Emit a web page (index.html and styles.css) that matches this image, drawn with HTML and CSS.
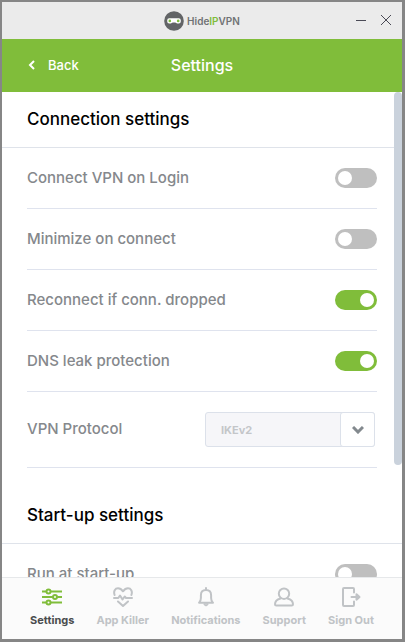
FILE: index.html
```html
<!DOCTYPE html>
<html lang="en">
<head>
<meta charset="utf-8">
<meta name="viewport" content="width=device-width, initial-scale=1">
<title>HideIPVPN - Settings</title>
<link rel="stylesheet" href="styles.css">
</head>
<body>
<div class="window">
  <div class="titlebar">
    <div class="brand">
      <svg class="brand-mark" viewBox="0 0 20 20" aria-hidden="true">
        <circle cx="10" cy="10" r="9.8" fill="#626466"/>
        <path d="M5.200 7.200h9.600a2 2 0 0 1 2 2v1.200a2 2 0 0 1-2 2h-1.600c-.8 0-1.200-1-2-1H8.800c-.8 0-1.200 1-2 1H5.200a2 2 0 0 1-2-2V9.200a2 2 0 0 1 2-2z" fill="#fff"/>
        <circle cx="5.800" cy="9.900" r="1.300" fill="#7fbf3b"/>
        <circle cx="14.200" cy="9.900" r="1.300" fill="#7fbf3b"/>
      </svg>
      <span class="brand-name">Hide<span class="brand-accent">IP</span>VPN</span>
    </div>
    <div class="window-controls">
      <button class="window-button" type="button" aria-label="Minimize">
        <svg viewBox="0 0 12 12"><path d="M1 6.500h10"/></svg>
      </button>
      <button class="window-button" type="button" aria-label="Close">
        <svg viewBox="0 0 12 12"><path d="M1 1l10 10M11 1L1 11"/></svg>
      </button>
    </div>
  </div>

  <header class="header">
    <button class="back" type="button">
      <svg class="back-icon" viewBox="0 0 8 10" aria-hidden="true"><path d="M7 1L3 5l4 4"/></svg>
      Back
    </button>
    <h1 class="title">Settings</h1>
  </header>

  <main class="content">
    <div class="scroll-thumb"></div>
    <section>
      <h2 class="section-title">Connection settings</h2>
      <div class="rows">
        <div class="row">
          <label for="login">Connect VPN on Login</label>
          <input class="toggle" type="checkbox" id="login">
        </div>
        <div class="row">
          <label for="minimize">Minimize on connect</label>
          <input class="toggle" type="checkbox" id="minimize">
        </div>
        <div class="row">
          <label for="reconnect">Reconnect if conn. dropped</label>
          <input class="toggle" type="checkbox" id="reconnect" checked>
        </div>
        <div class="row">
          <label for="dns">DNS leak protection</label>
          <input class="toggle" type="checkbox" id="dns" checked>
        </div>
        <div class="row row-tall">
          <label for="protocol">VPN Protocol</label>
          <div class="select">
            <select id="protocol"><option>IKEv2</option></select>
            <span class="select-arrow">
              <svg viewBox="0 0 12 8" aria-hidden="true"><path d="M1 1l5 5 5-5"/></svg>
            </span>
          </div>
        </div>
      </div>
    </section>
    <section>
      <h2 class="section-title section-title-next">Start-up settings</h2>
      <div class="rows">
        <div class="row">
          <label for="startup">Run at start-up</label>
          <input class="toggle" type="checkbox" id="startup">
        </div>
      </div>
    </section>
  </main>

  <nav class="nav">
    <a class="nav-item nav-item-active" href="#settings">
      <svg viewBox="0 0 20 20" aria-hidden="true"><path d="M0 4.500h4.500M8.500 4.500H20M0 10h11M15 10h5M0 15.500h4.500M8.500 15.500H20"/><circle cx="6.500" cy="4.500" r="2"/><circle cx="13" cy="10" r="2"/><circle cx="6.500" cy="15.500" r="2"/></svg>
      Settings
    </a>
    <a class="nav-item" href="#app-killer">
      <svg viewBox="0 0 20 20" aria-hidden="true"><path d="M1.600 8C.2 4.200 2.200 1.300 5 1.300c2.200 0 3.700 1.200 5 3 1.300-1.800 2.800-3 5-3 2.800 0 4.800 2.900 3.400 6.700M1 11h4.300l1.700-2.500 2.500 4 2.200-3 1.300 1.500h6M5 14.500l5 4.500 5-4.500"/></svg>
      App Killer
    </a>
    <a class="nav-item" href="#notifications">
      <svg viewBox="0 0 20 20" aria-hidden="true"><path d="M10 1v2M3 15.700h14c-1.400-1-1.900-2.500-1.900-4.700V8.200C15.100 5 13 3 10 3S4.900 5 4.900 8.200V11c0 2.200-.5 3.700-1.900 4.700z"/><path d="M8 17.200c.4 1.200 1 1.500 2 1.500s1.600-.3 2-1.500z" fill="currentColor" stroke-width="1"/></svg>
      Notifications
    </a>
    <a class="nav-item" href="#support">
      <svg viewBox="0 0 20 20" aria-hidden="true"><circle cx="10" cy="6.700" r="5.200"/><path d="M6.500 11.500C3 12.500 1 14.800 1 17.200c0 .9.500 1.300 1.300 1.300h15.400c.8 0 1.300-.4 1.300-1.300 0-2.400-2-4.700-5.500-5.700"/></svg>
      Support
    </a>
    <a class="nav-item" href="#sign-out">
      <svg viewBox="0 0 20 20" aria-hidden="true"><path d="M13 5.500V2c0-.7-.3-1-1-1H3c-.7 0-1 .3-1 1v16c0 .7.300 1 1 1h9c.7 0 1-.3 1-1v-3.500M10.500 10H18"/><path d="M15.500 7.300L18.500 10l-3 2.700z" fill="currentColor"/></svg>
      Sign Out
    </a>
  </nav>
</div>
</body>
</html>
```
FILE: styles.css
```css
* {
  box-sizing: border-box;
}

body {
  margin: 0;
  font-family: Inter, "Open Sans", sans-serif;
  color: #000;
}

button {
  padding: 0;
  border: 0;
  background: none;
  font: inherit;
  color: inherit;
}

svg {
  display: block;
  fill: none;
  stroke: currentColor;
}

.window {
  display: flex;
  flex-direction: column;
  height: 100vh;
  border: solid #868686;
  border-width: 2px 3px 3px 2px;
  background: #fff;
}

.titlebar {
  display: grid;
  grid-template-columns: 1fr auto 1fr;
  align-items: center;
  flex: none;
  height: 37px;
  padding: 0 10px;
  background: #ebebeb;
}

.brand {
  display: flex;
  grid-column: 2;
  align-items: center;
  gap: 3px;
}

.brand-mark {
  width: 20px;
  height: 20px;
  stroke: none;
}

.brand-name {
  font-size: 10px;
  font-weight: 600;
  color: #707274;
}

.brand-accent {
  color: #80bd3a;
}

.window-controls {
  display: flex;
  justify-content: flex-end;
  gap: 13px;
  padding-bottom: 2px;
}

.window-button svg {
  width: 12px;
  height: 12px;
  stroke: #4a4a55;
}

.header {
  display: grid;
  grid-template-columns: 1fr auto 1fr;
  align-items: center;
  flex: none;
  height: 53px;
  padding: 0 25px 2px;
  background: #80bd3a;
  color: #fff;
}

.back {
  display: flex;
  align-items: center;
  gap: 13px;
  font-size: 13px;
  font-weight: 500;
}

.back-icon {
  width: 8px;
  height: 10px;
  stroke-width: 2;
}

.title {
  margin: 0;
  font-size: 16px;
  font-weight: 500;
}

.content {
  position: relative;
  flex: 1;
  min-height: 0;
  overflow: hidden;
}

.scroll-thumb {
  position: absolute;
  top: 0;
  right: 0;
  width: 8px;
  height: 77%;
  border-radius: 4px;
  background: #cad2dc;
}

.section-title {
  margin: 0;
  padding: 0 25px;
  border-bottom: 1px solid #dfe3ea;
  font-size: 17px;
  font-weight: 500;
  line-height: 55px;
}

.section-title-next {
  padding-top: 20px;
}

.rows {
  padding: 0 25px;
}

.row {
  display: flex;
  align-items: center;
  justify-content: space-between;
  height: 61px;
  border-bottom: 1px solid #dfe3ee;
  font-size: 15px;
  font-weight: 500;
  color: #85888c;
}

.row label {
  padding-bottom: 2px;
}

.row-tall {
  height: 76px;
}

.toggle {
  appearance: none;
  width: 42px;
  height: 20px;
  margin: 0;
  padding: 3px;
  border-radius: 10px;
  background: #bfbfbf;
}

.toggle::before {
  content: "";
  display: block;
  width: 14px;
  height: 14px;
  border-radius: 50%;
  background: #fff;
}

.toggle:checked {
  background: #80bd3a;
}

.toggle:checked::before {
  margin-left: auto;
}

.select {
  display: grid;
  grid-template-columns: 1fr 35px;
  width: 170px;
  height: 35px;
  margin-right: 2px;
}

.select select {
  grid-area: 1 / 1 / 2 / 3;
  appearance: none;
  margin: 0;
  padding: 0 15px;
  border: 1px solid #dce1ea;
  border-radius: 3px;
  background: #f6f6f9;
  font-family: inherit;
  font-size: 11px;
  font-weight: 700;
  color: #c4c6c9;
}

.select-arrow {
  display: grid;
  grid-area: 1 / 2;
  place-items: center;
  border: 1px solid #dce1ea;
  border-radius: 3px;
  background: #fff;
  color: #83898e;
  pointer-events: none;
}

.select-arrow svg {
  width: 12px;
  height: 8px;
  stroke-width: 3;
}

.nav {
  display: flex;
  justify-content: space-between;
  flex: none;
  height: 62px;
  padding: 9px 28px 0;
  border-top: 1px solid #e6e8ea;
  background: #fbfbfb;
}

.nav-item {
  display: flex;
  flex-direction: column;
  align-items: center;
  gap: 5px;
  font-size: 11px;
  font-weight: 700;
  line-height: 16px;
  text-decoration: none;
  color: #c0c3c6;
}

.nav-item svg {
  width: 20px;
  height: 20px;
  stroke-width: 2;
  stroke-linecap: round;
  stroke-linejoin: round;
}

.nav-item-active {
  color: #4a4c4e;
}

.nav-item-active svg {
  stroke: #80bd3a;
  stroke-linecap: butt;
}
```
